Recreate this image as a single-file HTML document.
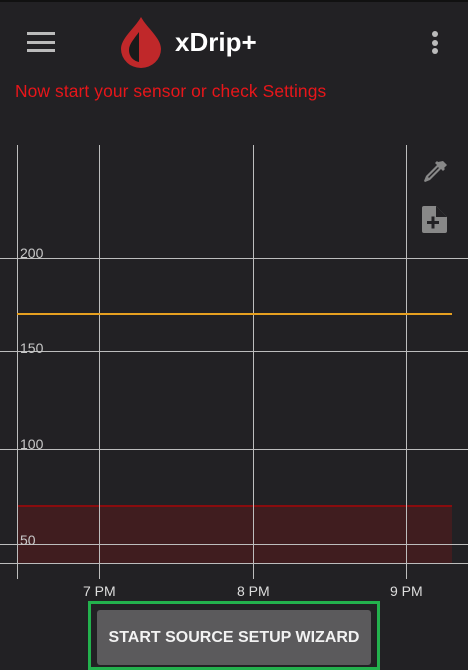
<!DOCTYPE html>
<html><head><style>
body{margin:0;width:468px;height:670px;background:#222124;overflow:hidden;position:relative;font-family:"Liberation Sans",sans-serif}
.a{position:absolute}
.vl{position:absolute;width:1px;background:#bdbdbd;top:145px;height:434px}
.hl{position:absolute;height:1px;background:#bdbdbd;left:0;width:468px}
.lb{position:absolute;color:#c8c8c8;font-size:14px;left:20px}
.tl{position:absolute;color:#ddd;font-size:14px;top:583px}
</style></head><body>
<div class="a" style="left:0;top:0;width:468px;height:2px;background:#111"></div>
<div class="a" style="left:27px;top:32px;width:28px;height:3px;background:#bbb"></div>
<div class="a" style="left:27px;top:41px;width:28px;height:3px;background:#bbb"></div>
<div class="a" style="left:27px;top:49px;width:28px;height:3px;background:#bbb"></div>
<svg class="a" style="left:118px;top:16px" width="46" height="52" viewBox="0 0 46 52">
<path d="M23 1 C17 12 3 22 3 33 A20 19 0 0 0 43 33 C43 22 29 12 23 1Z" fill="#c0282a"/>
<path d="M21 16 C16 23 11 28 11 34 C11 41 16 45 21 46Z" fill="#1a1a1a"/>
</svg>
<div class="a" style="left:175px;top:27px;color:#fff;font-size:26px;font-weight:bold">xDrip+</div>
<div class="a" style="left:432px;top:31px;width:6px;height:6px;border-radius:3px;background:#bbb"></div>
<div class="a" style="left:432px;top:40px;width:6px;height:6px;border-radius:3px;background:#bbb"></div>
<div class="a" style="left:432px;top:48px;width:6px;height:6px;border-radius:3px;background:#bbb"></div>
<div class="a" style="left:15px;top:81px;color:#e8161a;font-size:17.4px;letter-spacing:0.1px">Now start your sensor or check Settings</div>

<div class="a" style="left:17px;top:506px;width:435px;height:57px;background:#401d1f"></div>
<div class="a" style="left:17px;top:505px;width:435px;height:2px;background:#8a0c0e"></div>
<div class="vl" style="left:17px"></div>
<div class="vl" style="left:99px"></div>
<div class="vl" style="left:253px"></div>
<div class="vl" style="left:406px"></div>
<div class="hl" style="top:258px"></div>
<div class="hl" style="top:351px"></div>
<div class="hl" style="top:449px"></div>
<div class="hl" style="top:544px"></div>
<div class="hl" style="top:563px"></div>
<div class="a" style="left:17px;top:313px;width:435px;height:2px;background:#e6a020"></div>
<div class="lb" style="top:245px">200</div>
<div class="lb" style="top:340px">150</div>
<div class="lb" style="top:436px">100</div>
<div class="lb" style="top:532px">50</div>
<div class="tl" style="left:83px">7 PM</div>
<div class="tl" style="left:237px">8 PM</div>
<div class="tl" style="left:390px">9 PM</div>

<svg class="a" style="left:420px;top:158px" width="30" height="30" viewBox="0 0 30 30">
<path d="M23 3 L27 7 L24 10 L25 11 L23 13 L21 11 L10 22 L5 24 L4 23 L6 18 L17 7 L15 5 L17 3 L18 4 Z" fill="#888"/>
<path d="M8 19 L18 9 L19 10 L9 20Z" fill="#222124"/>
</svg>
<svg class="a" style="left:419px;top:205px" width="30" height="30" viewBox="0 0 30 30">
<path d="M3 3 Q3 1 5 1 L17 1 L28 12 L28 26 Q28 28 26 28 L5 28 Q3 28 3 26Z" fill="#888"/>
<path d="M17 1 L17 12 L28 12Z" fill="#222124"/>
<rect x="8" y="16" width="12" height="3" fill="#222124"/><rect x="12.5" y="11.5" width="3" height="12" fill="#222124"/>
</svg>

<div class="a" style="left:88px;top:601px;width:286px;height:63px;border:3px solid #23b14d"></div>
<div class="a" style="left:97px;top:610px;width:274px;height:55px;background:#5b5a5c;border-radius:3px;color:#f2f2f2;font-size:16px;font-weight:bold;text-align:center;line-height:55px">START SOURCE SETUP WIZARD</div>
</body></html>
